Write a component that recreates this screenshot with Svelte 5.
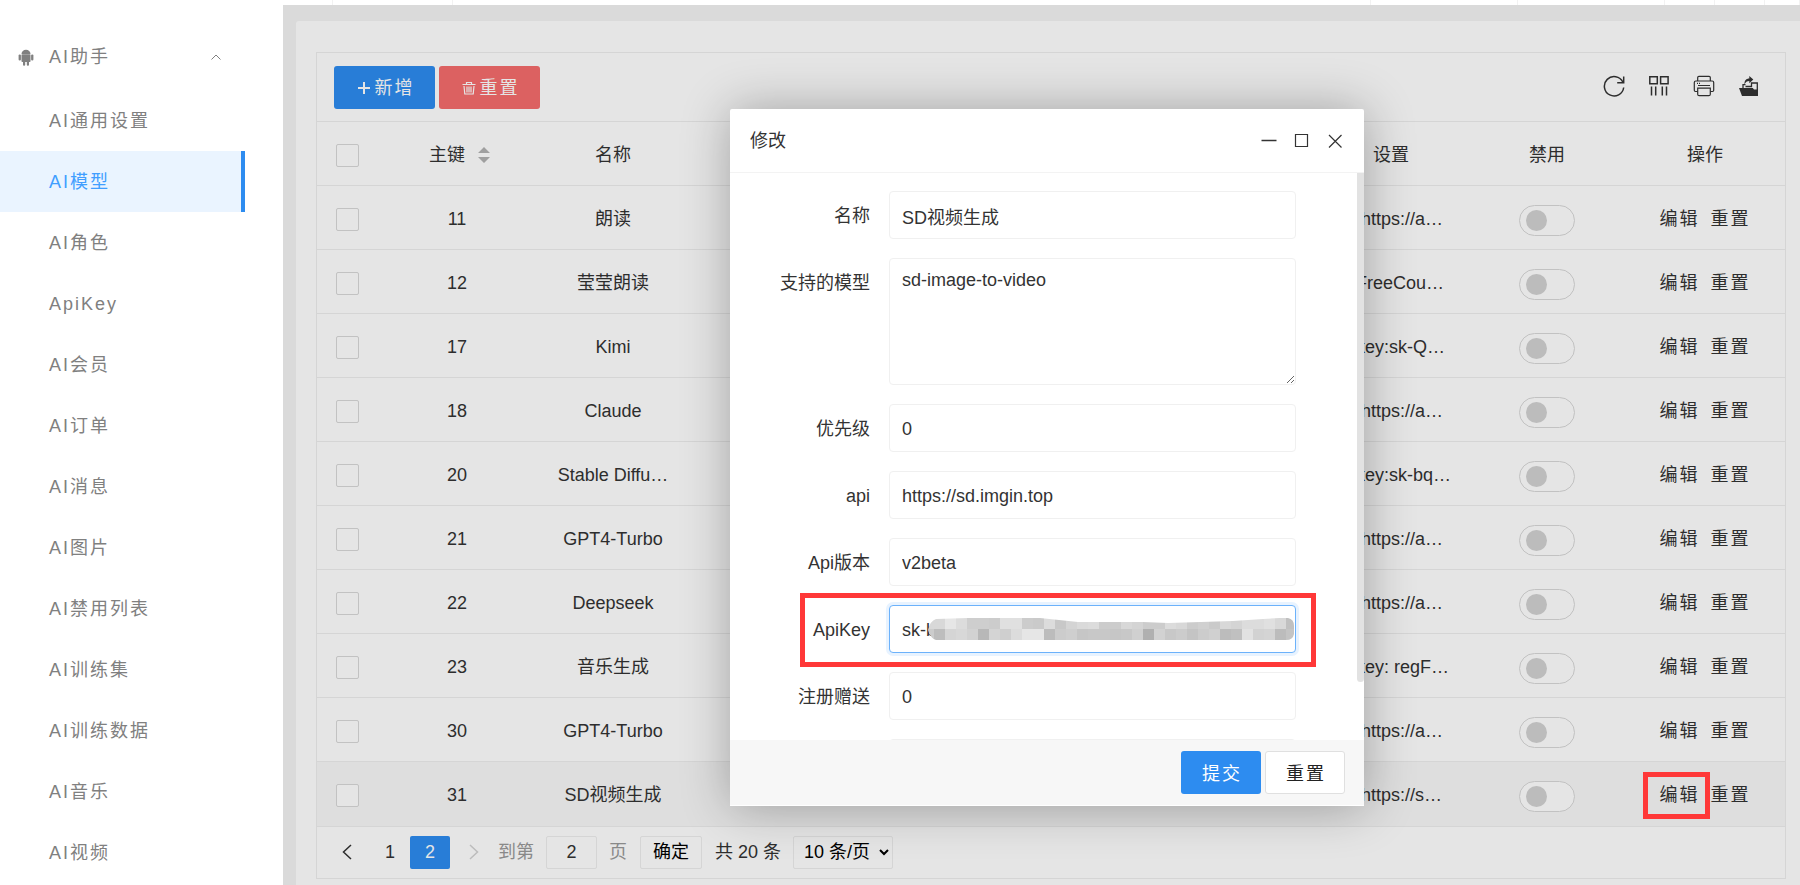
<script lang="ts">
    type Row = { id: number; name: string; setting: string };

    const menu: string[] = [
        "AI通用设置",
        "AI模型",
        "AI角色",
        "ApiKey",
        "AI会员",
        "AI订单",
        "AI消息",
        "AI图片",
        "AI禁用列表",
        "AI训练集",
        "AI训练数据",
        "AI音乐",
        "AI视频",
    ];
    let activeMenu = "AI模型";

    const rows: Row[] = [
        { id: 11, name: "朗读", setting: " https://a…" },
        { id: 12, name: "莹莹朗读", setting: "FreeCou…" },
        { id: 17, name: "Kimi", setting: "key:sk-Q…" },
        { id: 18, name: "Claude", setting: " https://a…" },
        { id: 20, name: "Stable Diffu…", setting: "key:sk-bq…" },
        { id: 21, name: "GPT4-Turbo", setting: " https://a…" },
        { id: 22, name: "Deepseek", setting: " https://a…" },
        { id: 23, name: "音乐生成", setting: "key: regF…" },
        { id: 30, name: "GPT4-Turbo", setting: " https://a…" },
        { id: 31, name: "SD视频生成", setting: " https://s…" },
    ];
    let editing = 31;

    let name = "SD视频生成";
    let models = "sd-image-to-video";
    let priority = "0";
    let api = "https://sd.imgin.top";
    let version = "v2beta";
    let apiKey = "sk-b";
    let gift = "0";
    let jumpTo = "2";

    // grey levels of the blocks that hide the key, one list per line
    const mosaic: string[][] = [
        "d8 d8 e6 dc ce ce cc e0 e0 cc ca dc c8 d4 da dc cc cc d8 d4 cc cc dc d8 cc d0 ca d8 d4 dc dc e0 d8 c0".split(" "),
        "cc bd d5 d8 d2 b8 d4 cf dc e6 e6 bc cc cf c6 c8 c8 c6 c8 d0 b0 d2 c8 cc c4 cc d0 bc c0 e2 d2 d4 bc c4".split(" "),
    ];

    function selectMenu(item: string) {
        activeMenu = item;
    }

    function editRow(row: Row) {
        editing = row.id;
        name = row.name;
    }
</script>

<div class="layout">
    <aside class="side">
        <button class="side-title">
            <svg class="android" viewBox="0 0 16 17" width="16" height="17">
                <path d="M3.500 5C3.500 2.400 5.500 0.800 8 0.800s4.500 1.600 4.500 4.200z" />
                <rect x="3.500" y="5.200" width="9" height="7.800" rx="0.800" />
                <rect x="0.600" y="5.600" width="2.300" height="6" rx="1" />
                <rect x="13.100" y="5.600" width="2.300" height="6" rx="1" />
                <rect x="5" y="11.500" width="2.200" height="5.300" rx="1" />
                <rect x="8.800" y="11.500" width="2.200" height="5.300" rx="1" />
            </svg>
            <span>AI助手</span>
            <svg class="fold" viewBox="0 0 10 6" width="10" height="6">
                <path d="M0.500 5.500 5 1l4.500 4.500" />
            </svg>
        </button>
        <nav>
            {#each menu as item}
                <a
                    href="#{item}"
                    class:active={item === activeMenu}
                    on:click={() => selectMenu(item)}>{item}</a
                >
            {/each}
        </nav>
    </aside>

    <main class="main">
        <div class="tabs">
            <i class="w-icon"></i><i class="w-tab"></i><i class="grow"></i>
            <i class="w-user"></i><i class="w-user"></i><i class="w-icon"></i><i class="w-icon"></i><i class="w-last"></i>
        </div>

        <div class="frame">
            <div class="card">
                <div class="table-view">
                    <div class="toolbar">
                        <button class="btn primary">
                            <svg viewBox="0 0 14 14" width="14" height="14" class="line bold"><path d="M7 1v12M1 7h12" /></svg>
                            <span>新增</span>
                        </button>
                        <button class="btn danger">
                            <svg viewBox="0 0 14 14" width="14" height="14" class="line thin">
                                <path d="M0.500 3.500h13M4.500 3.500V1.500h5v2M2 5l.8 8h8.400l.8-8M5 5.500v6M7 5.500v6M9 5.500v6" />
                            </svg>
                            <span>重置</span>
                        </button>
                        <div class="tools">
                            <button aria-label="刷新">
                                <svg viewBox="0 0 22 22" width="22" height="22" class="line">
                                    <path d="M19.800 7A9.700 9.700 0 1 0 20.700 12.500M20.700 1.500v6.300h-6.500" />
                                </svg>
                            </button>
                            <button aria-label="筛选列">
                                <svg viewBox="0 0 22 22" width="22" height="22" class="line">
                                    <path d="M1.800 1.800h7.500v7H1.800zM12.600 1.800h7.500v7h-7.500zM3.500 11.500v9M7.700 11.500v9M14.300 11.500v9M18.500 11.500v9" />
                                </svg>
                            </button>
                            <button aria-label="打印">
                                <svg viewBox="0 0 22 22" width="22" height="22" class="line thin">
                                    <path d="M4.700 6V2.500q0-1.200 1.200-1.200h10.200q1.200 0 1.200 1.200V6M4.700 16.500H2.500q-1.200 0-1.200-1.200V7.500q0-1.500 1.500-1.500h16.400q1.500 0 1.500 1.500v7.800q0 1.200-1.200 1.200h-2.200M5 10.500h12" />
                                    <path d="M4.700 13.200h12.600v6q0 1.500-1.500 1.500H6.200q-1.500 0-1.500-1.500z" />
                                    <path d="M4 8.300h1M6 8.300h1" />
                                </svg>
                            </button>
                            <button aria-label="导出">
                                <svg viewBox="0 0 22 22" width="22" height="22">
                                    <path d="M1 13h13.800l1.200 1.500h4V21H4z" fill="currentColor" />
                                    <path d="M5 13V9.700h2.500M7.500 11.500h6V8h5.800v7" fill="none" stroke="currentColor" stroke-width="1.300" />
                                    <path d="M6.500 9.500C6.300 5.500 8.200 3.700 11.300 3.600V1l4 3.600-4 3.600V6C9 6 7.500 7 6.500 9.500z" fill="currentColor" />
                                </svg>
                            </button>
                        </div>
                    </div>

                    <table>
                        <colgroup>
                            <col class="c-check" />
                            <col class="c-std" />
                            <col class="c-std" />
                            <col />
                            <col class="c-std" />
                            <col class="c-std" />
                            <col class="c-act" />
                        </colgroup>
                        <thead>
                            <tr>
                                <th class="check"><input type="checkbox" aria-label="全选" /></th>
                                <th>
                                    <span class="sortable">
                                        主键
                                        <svg viewBox="0 0 12 16" width="12" height="16">
                                            <path d="M6 0l6 6H0zM6 16l6-6H0z" />
                                        </svg>
                                    </span>
                                </th>
                                <th>名称</th>
                                <th></th>
                                <th>设置</th>
                                <th>禁用</th>
                                <th>操作</th>
                            </tr>
                        </thead>
                        <tbody>
                            {#each rows as row}
                                <tr class:hover={row.id === editing}>
                                    <td class="check"><input type="checkbox" aria-label="选择 {row.id}" /></td>
                                    <td>{row.id}</td>
                                    <td>{row.name}</td>
                                    <td></td>
                                    <td class="setting">{row.setting}</td>
                                    <td><input type="checkbox" class="switch" aria-label="禁用 {row.id}" /></td>
                                    <td>
                                        <div class="actions">
                                            <button class:marked={row.id === editing} on:click={() => editRow(row)}>编辑</button>
                                            <button>重置</button>
                                        </div>
                                    </td>
                                </tr>
                            {/each}
                        </tbody>
                    </table>

                    <div class="pager">
                        <button class="arrow" aria-label="上一页">
                            <svg viewBox="0 0 10 16" width="10" height="16" class="line"><path d="M9 1 1.500 8 9 15" /></svg>
                        </button>
                        <button class="page">1</button>
                        <button class="page current">2</button>
                        <button class="arrow" aria-label="下一页" disabled>
                            <svg viewBox="0 0 10 16" width="10" height="16" class="line"><path d="M1 1l7.500 7L1 15" /></svg>
                        </button>
                        <label class="jump">到第<input type="text" bind:value={jumpTo} />页</label>
                        <button class="confirm">确定</button>
                        <span class="total">共 20 条</span>
                        <select aria-label="每页条数">
                            <option>10 条/页</option>
                        </select>
                    </div>
                </div>
            </div>

            <div class="shade"></div>

            <div class="layer" role="dialog" aria-label="修改">
                <header>
                    <span>修改</span>
                    <div class="window-btns">
                        <button aria-label="最小化">
                            <svg viewBox="0 0 16 16" width="16" height="16" class="line"><path d="M0.500 7.500h15" /></svg>
                        </button>
                        <button aria-label="最大化">
                            <svg viewBox="0 0 16 16" width="16" height="16" class="line thin"><path d="M1.500 1.500h12v12h-12z" /></svg>
                        </button>
                        <button aria-label="关闭">
                            <svg viewBox="0 0 16 16" width="16" height="16" class="line thin"><path d="M2 2l12.500 12.500M14.500 2 2 14.500" /></svg>
                        </button>
                    </div>
                </header>
                <form id="model-form" on:submit|preventDefault>
                    <div class="item">
                        <label for="name">名称</label>
                        <input id="name" type="text" bind:value={name} />
                    </div>
                    <div class="item">
                        <label for="models">支持的模型</label>
                        <textarea id="models" bind:value={models}></textarea>
                    </div>
                    <div class="item">
                        <label for="priority">优先级</label>
                        <input id="priority" type="text" bind:value={priority} />
                    </div>
                    <div class="item">
                        <label for="api">api</label>
                        <input id="api" type="text" bind:value={api} />
                    </div>
                    <div class="item">
                        <label for="version">Api版本</label>
                        <input id="version" type="text" bind:value={version} />
                    </div>
                    <div class="item key">
                        <label for="api-key">ApiKey</label>
                        <input id="api-key" class="focused" type="text" bind:value={apiKey} />
                        <svg class="mosaic" viewBox="0 0 366 22" width="366" height="22">
                            <clipPath id="smear">
                                <path d="M8 1 40 0H112L150 4H215L240 5 305 3 335 1 352 0H360Q366 1 366 8V16Q365 22 358 22H8Q3 21 0 12Q2 3 8 1z" />
                            </clipPath>
                            <g clip-path="url(#smear)" shape-rendering="crispEdges">
                                {#each mosaic as line, y}
                                    {#each line as grey, x}
                                        <rect x={x * 11 - 5} y={y * 11} width="11" height="11" fill="#{grey}{grey}{grey}" />
                                    {/each}
                                {/each}
                            </g>
                        </svg>
                    </div>
                    <div class="item">
                        <label for="gift">注册赠送</label>
                        <input id="gift" type="text" bind:value={gift} />
                    </div>
                    <div class="item">
                        <span class="no-label"></span>
                        <input type="text" aria-label="备注" />
                    </div>
                    <div class="scrollbar"></div>
                </form>
                <footer>
                    <button class="btn primary" type="submit" form="model-form">提交</button>
                    <button class="btn plain" type="reset" form="model-form">重置</button>
                </footer>
            </div>
        </div>
    </main>
</div>

<style>
    :global(body) {
        overflow: hidden;
    }

    .layout {
        display: flex;
        height: 100vh;
        font-family: "Liberation Sans", "Noto Sans CJK SC", sans-serif;
        font-size: 18px;
        line-height: 24px;
        color: #333;
        background: #fff;
    }

    .layout * {
        box-sizing: border-box;
    }

    button,
    input,
    textarea,
    select {
        margin: 0;
        font: inherit;
        color: inherit;
    }

    button {
        padding: 0;
        border: 0;
        background: none;
        cursor: pointer;
    }

    svg {
        display: block;
        flex: none;
    }

    .line {
        fill: none;
        stroke: currentColor;
        stroke-width: 1.5;
    }

    .line.bold {
        stroke-width: 2;
    }

    .line.thin {
        stroke-width: 1.2;
    }

    /* sidebar */
    .side {
        flex: none;
        width: 283px;
        overflow: hidden;
        color: #808080;
        letter-spacing: 2px;
    }

    .side-title {
        display: flex;
        align-items: center;
        width: 221px;
        height: 66px;
        margin: 24px 0 0;
        padding-left: 18px;
        letter-spacing: inherit;
    }

    .android {
        margin-right: 15px;
        fill: #808080;
    }

    .fold {
        margin-left: auto;
        fill: none;
        stroke: #808080;
    }

    nav a {
        display: flex;
        align-items: center;
        width: 245px;
        height: 61px;
        padding-left: 49px;
        color: inherit;
        text-decoration: none;
    }

    nav a.active {
        color: #409eff;
        background: #eaf4ff;
        border-right: 4px solid #2d8cf0;
    }

    /* page area */
    .main {
        flex: 1;
        display: flex;
        flex-direction: column;
        min-width: 0;
    }

    .tabs {
        display: flex;
        flex: none;
        height: 5px;
    }

    .tabs i {
        border-right: 1px solid #f2f2f2;
    }

    .w-icon {
        width: 50px;
    }

    .w-tab {
        width: 120px;
    }

    .w-user {
        width: 147px;
    }

    .w-last {
        width: 35px;
    }

    .grow {
        flex: 1;
    }

    .frame {
        position: relative;
        flex: 1;
        min-height: 0;
        padding: 16px 0 0 13px;
        overflow: hidden;
        background: #f3f3f3;
    }

    .card {
        min-height: 100%;
        padding: 31px 14px 8px 20px;
        border-radius: 3px 0 0 0;
        background: #fff;
    }

    .table-view {
        border: 1px solid #eee;
    }

    .toolbar {
        display: flex;
        align-items: center;
        gap: 4px;
        height: 68px;
        padding: 0 25px 0 17px;
    }

    .btn {
        display: flex;
        align-items: center;
        justify-content: center;
        gap: 4px;
        height: 43px;
        padding: 2px 0 0 2px;
        border-radius: 3px;
        color: #fff;
        letter-spacing: 2px;
        white-space: nowrap;
    }

    .toolbar .btn {
        width: 101px;
    }

    .primary {
        background: #2d8cf0;
    }

    .danger {
        background: #f56c6c;
    }

    .plain {
        border: 1px solid #e0e0e0;
        color: #222;
        background: #fff;
    }

    .tools {
        display: flex;
        gap: 23px;
        margin-left: auto;
        padding-bottom: 2px;
    }

    table {
        width: 100%;
        table-layout: fixed;
        border-collapse: collapse;
    }

    .c-check {
        width: 62px;
    }

    .c-std {
        width: 156px;
    }

    .c-act {
        width: 160px;
    }

    th,
    td {
        height: 64px;
        padding: 3px 0 0;
        border-top: 1px solid #eee;
        font-weight: normal;
        text-align: center;
        white-space: pre;
    }

    tr.hover {
        background: #f8f8f8;
    }

    .check {
        text-align: left;
        padding-left: 19px;
    }

    input[type="checkbox"] {
        display: block;
        appearance: none;
        width: 23px;
        height: 23px;
        border: 1px solid #d8d8d8;
        border-radius: 2px;
        background: #fff;
    }

    input[type="checkbox"].switch {
        width: 56px;
        height: 31px;
        margin: 2px auto 0;
        padding: 4px 6px;
        border-radius: 16px;
    }

    .switch::before {
        content: "";
        display: block;
        width: 21px;
        height: 21px;
        border-radius: 50%;
        background: #d2d2d2;
    }

    .sortable {
        display: flex;
        align-items: center;
        justify-content: center;
        gap: 13px;
        padding-left: 5px;
        white-space: normal;
    }

    .sortable svg {
        fill: #b2b2b2;
    }

    .setting {
        padding-left: 43px;
        text-align: left;
    }

    .actions {
        display: flex;
        justify-content: center;
        gap: 11px;
    }

    .actions button {
        position: relative;
        letter-spacing: 2px;
    }

    .marked::after,
    .key::after {
        content: "";
        position: absolute;
        z-index: 3;
        border: 5px solid #ff3838;
        pointer-events: none;
    }

    .marked::after {
        inset: -11px -10px -12px -17px;
    }

    .pager {
        display: flex;
        align-items: center;
        height: 52px;
        padding-left: 25px;
        border-top: 1px solid #eee;
    }

    .arrow:disabled {
        margin: 0 19px;
        color: #d2d2d2;
    }

    .page {
        width: 40px;
        height: 33px;
        border-radius: 2px;
    }

    .arrow + .page {
        margin-left: 18px;
    }

    .current {
        color: #fff;
        background: #2d8cf0;
    }

    .jump {
        color: #999;
    }

    .jump input {
        width: 51px;
        height: 33px;
        margin: 0 12px;
        color: #333;
        text-align: center;
    }

    .jump input,
    .confirm,
    .pager select {
        border: 1px solid #eee;
        border-radius: 2px;
        background: #fff;
    }

    .confirm {
        width: 62px;
        height: 33px;
        margin: 0 13px;
        color: #000;
    }

    .pager select {
        width: 100px;
        height: 33px;
        margin-left: 12px;
        padding: 0 0 0 6px;
        color: #000;
    }

    /* dialog */
    .shade {
        position: absolute;
        inset: 0;
        z-index: 1;
        background: rgba(0, 0, 0, 0.1);
    }

    .layer {
        position: absolute;
        top: 104px;
        left: 447px;
        z-index: 4;
        width: 634px;
        border-radius: 2px;
        background: #fff;
        box-shadow: 1px 1px 50px rgba(0, 0, 0, 0.3);
    }

    .layer header {
        display: flex;
        align-items: center;
        justify-content: space-between;
        height: 64px;
        padding: 0 21px 0 20px;
        border-bottom: 1px solid #f3f3f3;
    }

    .window-btns {
        display: flex;
        gap: 17px;
    }

    form {
        position: relative;
        display: flex;
        flex-direction: column;
        gap: 19px;
        height: 567px;
        padding-top: 18px;
        overflow: hidden;
    }

    .item {
        position: relative;
        display: flex;
        flex: none;
        padding-right: 68px;
    }

    .item label,
    .no-label {
        flex: none;
        width: 159px;
        padding: 13px 19px 0 0;
        text-align: right;
    }

    .item input,
    .item textarea {
        flex: 1;
        min-width: 0;
        height: 48px;
        padding: 2px 12px 0;
        border: 1px solid #f0f0f0;
        border-radius: 4px;
        outline: 0;
        background: #fff;
    }

    .item textarea {
        height: 127px;
        padding: 9px 12px;
    }

    .item .focused {
        border-color: #6cb2fb;
        box-shadow: 0 0 0 3px #e8f3ff;
    }

    .key::after {
        inset: -12px 48px -14px 70px;
    }

    .mosaic {
        position: absolute;
        top: 13px;
        left: 198px;
    }

    .scrollbar {
        position: absolute;
        top: 0;
        right: 0;
        width: 7px;
        height: 509px;
        border-radius: 0 0 4px 4px;
        background: #e2e2e2;
    }

    .layer footer {
        display: flex;
        align-items: center;
        justify-content: flex-end;
        gap: 4px;
        height: 66px;
        padding-right: 19px;
        border-bottom: 1px solid #fff;
        background: #f7f7f7;
    }

    .layer footer .btn {
        width: 80px;
    }
</style>
